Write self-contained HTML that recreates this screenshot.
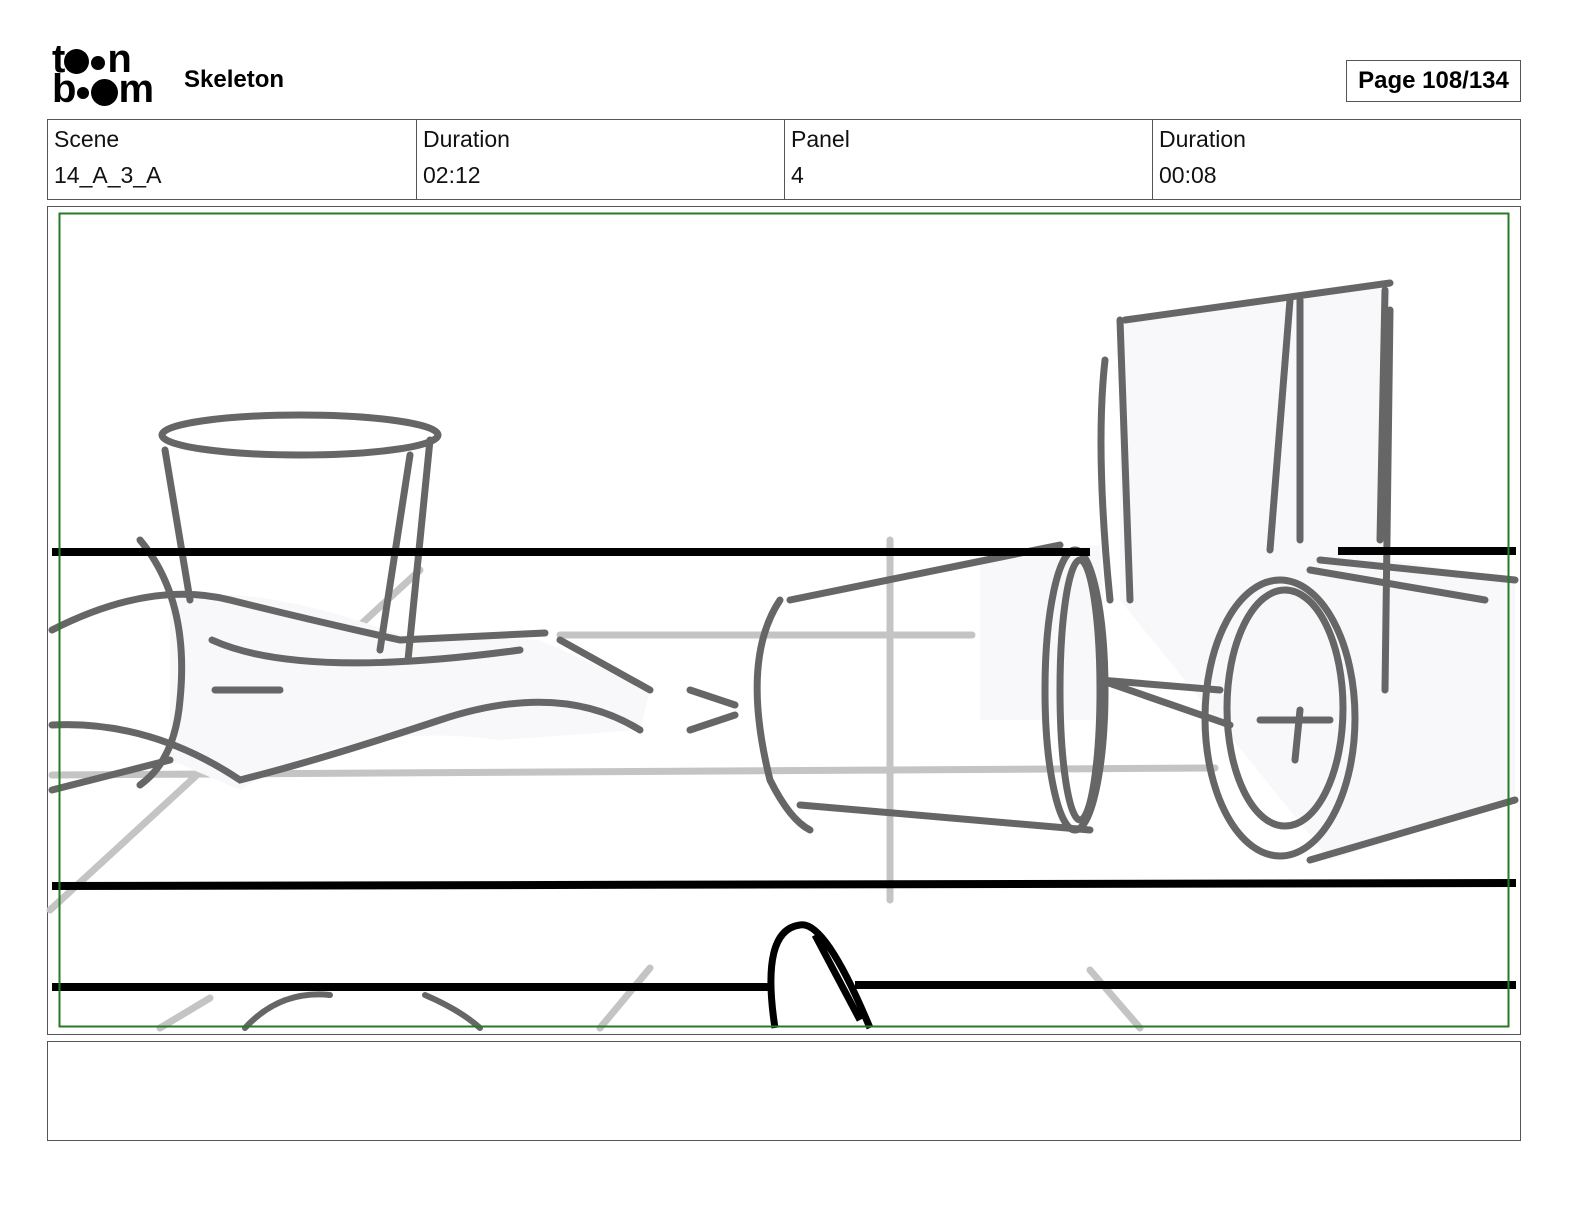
<!DOCTYPE html>
<html><head><meta charset="utf-8"><style>
body{margin:0;width:1584px;height:1224px;background:#fff;font-family:"Liberation Sans",sans-serif;position:relative;overflow:hidden}
.abs{position:absolute}
.cell{position:absolute;top:119px;height:81px;border:1px solid #555;box-sizing:border-box;font-size:23px;color:#111}
.cell div{position:absolute;left:6px}
</style></head><body>
<div class="abs" style="left:52px;top:44px;font-weight:900;font-size:40px;line-height:30px;letter-spacing:-1px">
<div>t<span style="display:inline-block;width:25px;height:25px;border-radius:50%;background:#000;vertical-align:-2px"></span><span style="display:inline-block;width:14px;height:14px;border-radius:50%;background:#000;margin:0 2px;vertical-align:2px"></span>n</div>
<div>b<span style="display:inline-block;width:12px;height:12px;border-radius:50%;background:#000;margin:0 2px;vertical-align:3px"></span><span style="display:inline-block;width:27px;height:27px;border-radius:50%;background:#000;vertical-align:-4px"></span>m</div>
</div>
<div class="abs" style="left:184px;top:66px;font-weight:bold;font-size:24px">Skeleton</div>
<div class="abs" style="left:1346px;top:60px;width:175px;height:42px;border:1px solid #555;box-sizing:border-box;font-weight:bold;font-size:24px;line-height:40px;text-align:center">Page 108/134</div>
<div class="cell" style="left:47px;width:370px"><div style="top:6px">Scene</div><div style="top:42px">14_A_3_A</div></div>
<div class="cell" style="left:416px;width:369px"><div style="top:6px">Duration</div><div style="top:42px">02:12</div></div>
<div class="cell" style="left:784px;width:369px"><div style="top:6px">Panel</div><div style="top:42px">4</div></div>
<div class="cell" style="left:1152px;width:369px"><div style="top:6px">Duration</div><div style="top:42px">00:08</div></div>
<div class="abs" style="left:47px;top:206px;width:1474px;height:829px;border:1px solid #555;box-sizing:border-box"></div>
<div class="abs" style="left:47px;top:1041px;width:1474px;height:100px;border:1px solid #555;box-sizing:border-box"></div>
<svg class="abs" style="left:0;top:0" width="1584" height="1224" fill="none" stroke-linecap="round">
<g stroke="#c4c4c4" stroke-width="7">
<path d="M560 635H972M52 775L1215 768M890 540V900M50 910L420 570M160 1028L210 998M600 1028L650 968M1090 970L1140 1028"/>
</g>
<path d="M980 560L1100 545L1110 720L980 720Z" fill="#f8f7fa"/>
<path d="M1120 320L1390 285L1390 560L1515 580L1515 800L1330 860L1120 600Z" fill="#f8f7fa"/>
<path d="M170 600Q250 580 400 635L540 640L650 690L640 730L500 740Q350 720 240 790L170 760Z" fill="#f8f7fa"/>
<g stroke="#666" stroke-width="7">
<ellipse cx="300" cy="435" rx="138" ry="20"/>
<path d="M165 450L190 600M410 455L380 650M430 440L408 660"/>
<path d="M52 630Q150 580 230 600T400 640L545 633M52 725Q150 720 240 780Q320 760 440 720T640 730M52 790L170 760"/>
<path d="M140 540Q190 600 180 700Q175 760 140 785M212 640Q300 680 520 650M215 690H280"/>
<path d="M560 640L650 690M690 690L735 705M690 730L735 715"/>
<path d="M780 600Q740 660 770 780Q790 820 810 830M790 600L1060 545M800 805L1090 830"/>
<ellipse cx="1075" cy="690" rx="30" ry="140"/>
<ellipse cx="1080" cy="690" rx="20" ry="130"/>
<path d="M1105 360Q1095 450 1110 600M1120 320L1130 600M1125 320L1390 283M1290 300L1270 550M1300 300L1300 540M1385 290L1380 540M1390 310L1385 690M1100 680L1220 690M1100 680L1230 725M1260 720H1330M1300 710L1295 760M1310 570L1485 600M1320 560L1515 580M1310 860L1515 800"/>
<ellipse cx="1280" cy="718" rx="75" ry="138"/>
<ellipse cx="1285" cy="708" rx="58" ry="118"/>
</g>
<g stroke="#000" stroke-width="8" stroke-linecap="butt">
<path d="M52 552H1090M1338 551H1516M52 886L1516 883M52 987H770M855 985H1516"/>
<path d="M775 1028Q760 930 800 925Q825 920 870 1028M815 935L860 1020" stroke-width="7"/>
</g>
<g stroke="#666" stroke-width="6"><path d="M245 1028Q280 990 330 995M425 995Q460 1010 480 1028"/></g>
<rect x="59.5" y="213.5" width="1449" height="813" stroke="#2a7a2a" stroke-width="2"/>
</svg>
</body></html>
